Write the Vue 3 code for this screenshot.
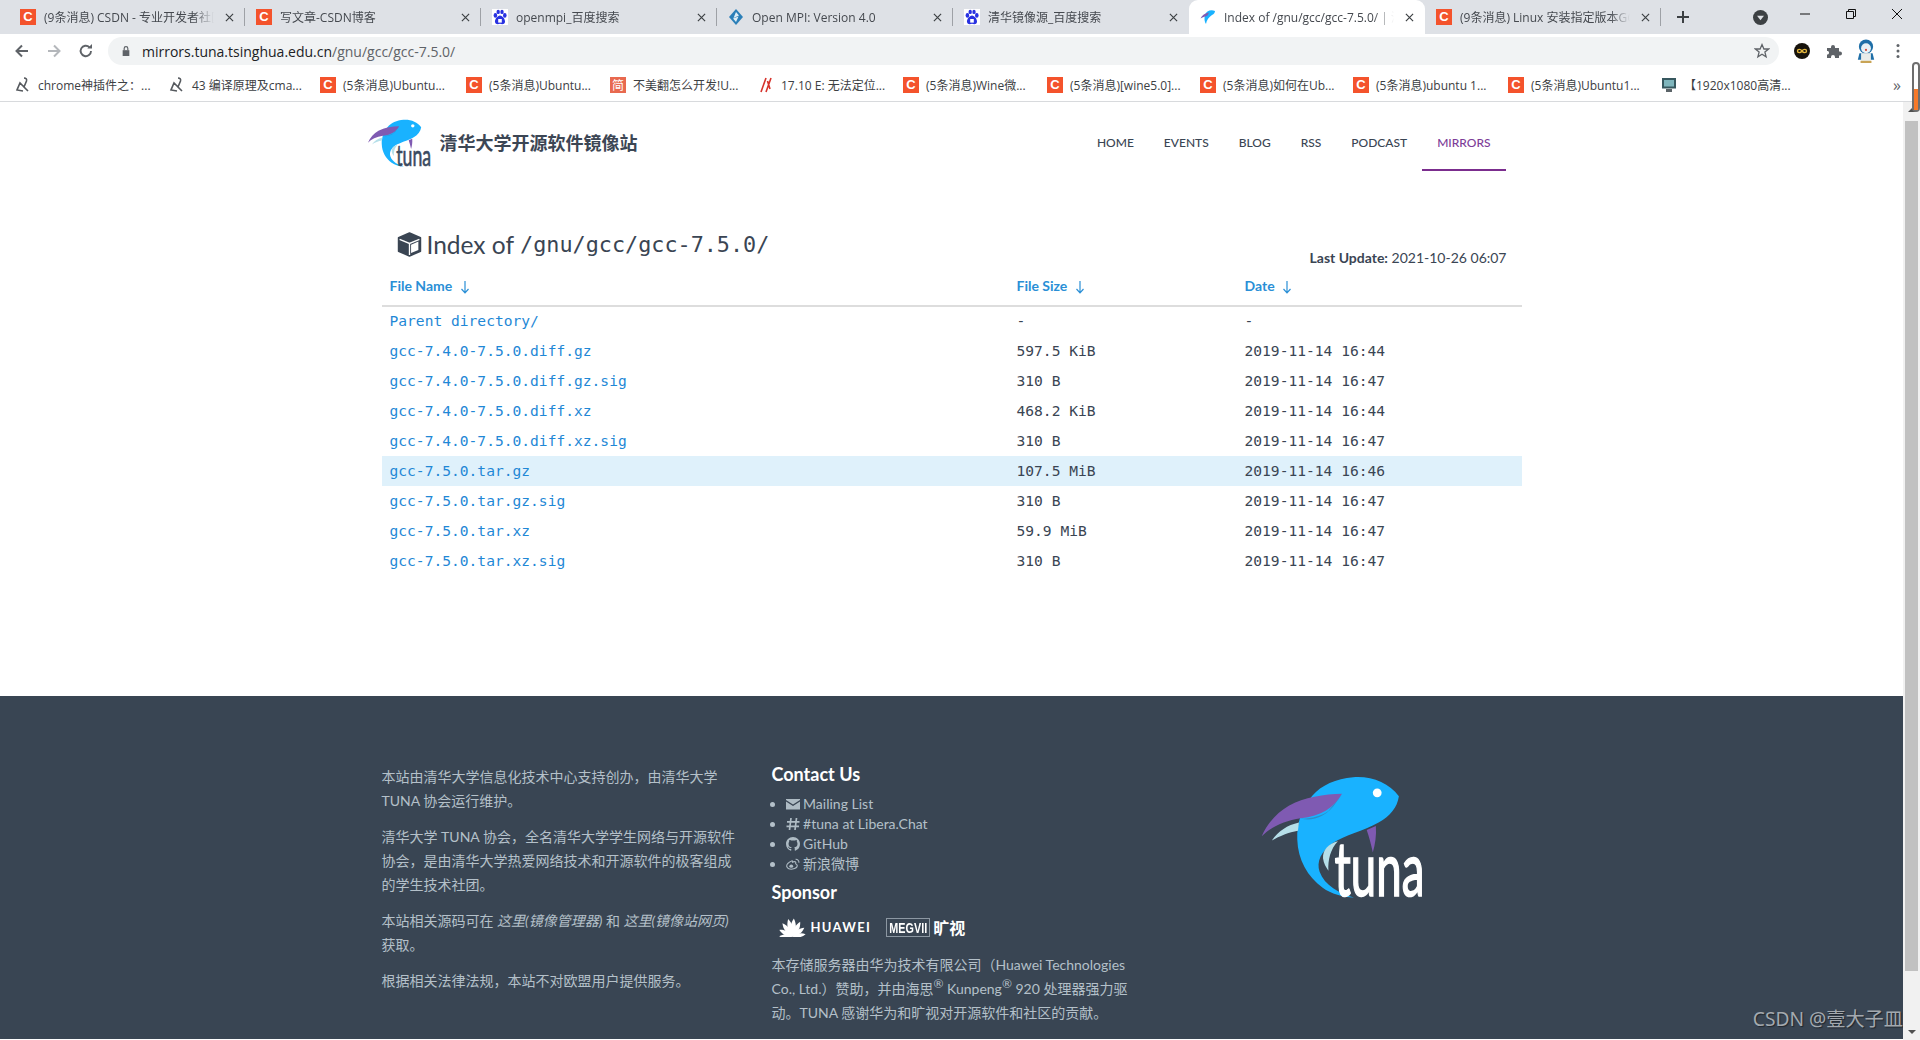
<template>
  <div class="window">
    <!-- shared fish, small one in the header and big one in the footer -->
    <svg class="defs" width="0" height="0">
      <g id="tuna-fish">
        <path d="M470 112C440 72 390 52 335 56C285 60 240 80 215 110C185 145 168 190 170 240C172 300 200 350 245 382C270 400 305 410 338 411C295 400 250 375 236 335C226 305 240 275 275 250C310 228 365 215 410 190C445 170 465 145 470 112Z" fill="#19b2ff"/>
        <path d="M180 178C210 186 255 178 285 130L302 106L262 156C240 172 205 180 180 178Z" fill="#2b8fc9"/>
        <path d="M302 105C250 106 190 115 145 140C110 160 82 192 65 230C90 205 130 184 180 177C240 172 280 145 302 105Z" fill="#7f5ab2"/>
        <path d="M95 243C115 215 140 198 175 190L172 214C145 218 118 230 95 243Z" fill="#b6dfe9"/>
        <path d="M290 245C262 252 245 270 246 295C248 310 255 322 262 332C260 300 268 268 290 245Z" fill="#b6dfe9"/>
        <path d="M375 212L402 200C404 228 400 255 393 278C388 255 382 232 375 212Z" fill="#7f5ab2"/>
        <circle cx="406" cy="102" r="13" fill="#fff"/>
      </g>
    </svg>

    <div class="tabstrip">
      <div
        v-for="(tab, i) in tabs"
        :key="i"
        class="tab"
        :class="{ active: tab.active, nosep: tab.active || tabs[i + 1]?.active }"
      >
        <span v-if="tab.icon === 'csdn'" class="fav-c">C</span>
        <svg v-else-if="tab.icon === 'baidu'" class="fav" viewBox="0 0 16 16">
          <rect width="16" height="16" fill="#fff"/>
          <ellipse cx="3.4" cy="6.4" rx="1.8" ry="2.3" fill="#2932e1"/>
          <ellipse cx="6.2" cy="2.9" rx="1.7" ry="2.2" fill="#2932e1"/>
          <ellipse cx="10" cy="2.9" rx="1.7" ry="2.2" fill="#2932e1"/>
          <ellipse cx="12.8" cy="6.4" rx="1.8" ry="2.3" fill="#2932e1"/>
          <path d="M8 6.5C5.5 6.5 2.6 10.5 3 13C3.4 15.6 6 15.4 8 14.8C10 15.4 12.6 15.6 13 13C13.4 10.5 10.5 6.5 8 6.5Z" fill="#2932e1"/>
          <rect x="6.2" y="10" width="3.6" height="3.6" fill="#fff"/>
        </svg>
        <svg v-else-if="tab.icon === 'mpi'" class="fav" viewBox="0 0 16 16">
          <path d="M8 0L15 8L8 16L1 8Z" fill="#2b7fb8"/>
          <path d="M8 3L11 6.5L5.5 9L8 3ZM10.5 7.5L8 13L5 9.5Z" fill="#dfeef6"/>
        </svg>
        <svg v-else class="fav" viewBox="0 0 16 16">
          <path d="M15 2C11 0 6 2 5 6C4 9 4.5 13 6 15C6.5 11 9 8 12 6C14 5 15 3.5 15 2Z" fill="#19b2ff"/>
          <path d="M9 3.5C5 4 2 6 0.5 9.5C3 8 6 7.5 7.5 6.5Z" fill="#7f5ab2"/>
        </svg>
        <span class="tab-title">{{ tab.title }}</span>
        <svg class="tab-x" viewBox="0 0 10 10"><path d="M1 1L9 9M9 1L1 9" stroke="#3c4043" stroke-width="1.3"/></svg>
      </div>
      <svg class="plus" viewBox="0 0 14 14"><path d="M7 1V13M1 7H13" stroke="#3c4043" stroke-width="2"/></svg>
      <svg class="tab-menu" viewBox="0 0 14 14"><circle cx="7" cy="7" r="7" fill="#3c4043"/><path d="M3.8 5.4H10.2L7 9.6Z" fill="#dee1e6"/></svg>
      <div class="winbtns">
        <svg viewBox="0 0 12 12"><path d="M1 6H11" stroke="#111" stroke-width="1"/></svg>
        <svg viewBox="0 0 12 12"><path d="M1.5 3.5H8.5V10.5H1.5ZM3.5 3.5V1.5H10.5V8.5H8.5" fill="none" stroke="#111" stroke-width="1"/></svg>
        <svg viewBox="0 0 12 12"><path d="M1 1L11 11M11 1L1 11" stroke="#111" stroke-width="1"/></svg>
      </div>
    </div>

    <div class="toolbar">
      <button class="tool">
        <svg viewBox="0 0 16 16"><path d="M14 8H3M8 2.5L2.5 8L8 13.5" fill="none" stroke="#5f6368" stroke-width="2"/></svg>
      </button>
      <button class="tool">
        <svg viewBox="0 0 16 16"><path d="M2 8H13M8 2.5L13.5 8L8 13.5" fill="none" stroke="#b4b7bb" stroke-width="2"/></svg>
      </button>
      <button class="tool">
        <svg viewBox="0 0 16 16"><path d="M13 8A5.2 5.2 0 1 1 11.4 4.2" fill="none" stroke="#5f6368" stroke-width="1.9"/><path d="M9.3 5.6H14V1Z" fill="#5f6368"/></svg>
      </button>
      <div class="omnibox">
        <svg class="lock" viewBox="0 0 12 14"><path d="M2 6H10V13H2Z" fill="#5f6368"/><path d="M3.8 6V4A2.2 2.2 0 0 1 8.2 4V6" fill="none" stroke="#5f6368" stroke-width="1.4"/></svg>
        <span class="url"><b>mirrors.tuna.tsinghua.edu.cn</b>/gnu/gcc/gcc-7.5.0/</span>
        <svg class="star" viewBox="0 0 16 16"><path d="M8 1.6L9.9 6H14.6L10.9 9.1L12.1 13.8L8 11.2L3.9 13.8L5.1 9.1L1.4 6H6.1Z" fill="none" stroke="#5f6368" stroke-width="1.3"/></svg>
      </div>
      <div class="ext-group">
        <button class="tool">
          <svg viewBox="0 0 16 16"><circle cx="8" cy="8" r="8" fill="#17130c"/><path d="M8 8C6.5 5.8 3.5 6 3.5 8S6.5 10.2 8 8C9.5 5.8 12.5 6 12.5 8S9.5 10.2 8 8Z" fill="none" stroke="#e2b53c" stroke-width="1.4"/></svg>
        </button>
        <button class="tool">
          <svg viewBox="0 0 16 16"><path d="M1 5H5V4A2 2 0 0 1 9 4V5H13V8.500H14A2 2 0 0 1 14 12.500H13V15H9V14A2 2 0 0 0 5 14V15H1V11.500H2A2 2 0 0 0 2 8H1Z" fill="#5f6368"/></svg>
        </button>
        <button class="tool">
          <svg class="penguin" viewBox="0 0 16 22"><ellipse cx="8" cy="7" rx="6.500" ry="6.500" fill="#1f6fa8"/><ellipse cx="8" cy="8.500" rx="4.500" ry="4.500" fill="#e8f1f5"/><circle cx="8" cy="10" r="1" fill="#d4483a"/><path d="M2 13H14L15.500 19H0.500Z" fill="#1f6fa8"/><rect x="3.500" y="13" width="9" height="7" fill="#e9ecea"/><path d="M3 20H13V22H3Z" fill="#c9a455"/></svg>
        </button>
        <button class="tool">
          <svg viewBox="0 0 16 16"><circle cx="8" cy="2.500" r="1.500" fill="#5f6368"/><circle cx="8" cy="8" r="1.500" fill="#5f6368"/><circle cx="8" cy="13.500" r="1.500" fill="#5f6368"/></svg>
        </button>
      </div>
    </div>

    <div class="bookmarks">
      <div v-for="(b, i) in bookmarks" :key="i" class="bm" :style="{ width: b.w + 'px' }">
        <span v-if="b.icon === 'csdn'" class="fav-c">C</span>
        <span v-else-if="b.icon === 'jian'" class="fav-j">简</span>
        <svg v-else-if="b.icon === 'lambda'" class="fav" viewBox="0 0 16 16">
          <path d="M9 1C11 1 12 2 11.500 4L9 10L13 14M9 10L5 6L2 13L8 14" fill="none" stroke="#55595e" stroke-width="1.600"/>
        </svg>
        <svg v-else-if="b.icon === 'slash'" class="fav" viewBox="0 0 16 16">
          <path d="M8 1L3 15M13 1L8 15M9.500 4L12 12" fill="none" stroke="#d6332c" stroke-width="1.600"/>
        </svg>
        <svg v-else class="fav" viewBox="0 0 16 16">
          <rect x="1" y="1" width="14" height="10.500" fill="#37585f"/>
          <rect x="3" y="3" width="10" height="6.500" fill="#7fb6bd"/>
          <rect x="5" y="12" width="6" height="3" fill="#5b6468"/>
        </svg>
        <span class="bm-text">{{ b.title }}</span>
      </div>
      <span class="bm-more">»</span>
    </div>

    <div class="viewport">
      <div class="page">
        <main class="main">
          <div class="container">
            <header class="site-head">
              <div class="brand">
                <svg class="logo-small" viewBox="60 50 490 365">
                  <use href="#tuna-fish"/>
                  <text x="280" y="408" class="logo-word" textLength="265" lengthAdjust="spacingAndGlyphs">tuna</text>
                </svg>
                <span class="brand-name">清华大学开源软件镜像站</span>
              </div>
              <nav class="nav">
                <a v-for="item in navItems" :key="item" :class="{ current: item === 'MIRRORS' }">{{ item }}</a>
              </nav>
            </header>

            <div class="title-row">
              <h1>
                <svg class="cube" viewBox="0 0 24 24">
                  <path d="M12 1L22.500 5.500V18.500L12 23L1.500 18.500V5.500Z" fill="#3a4553" stroke="#3a4553" stroke-linejoin="round" stroke-width="1.500"/>
                  <path d="M13.500 12.200L20.500 9.200V17.200L13.500 20.200Z" fill="#fff"/>
                  <path d="M2.500 7L12 11L21.500 7M12 11V22" fill="none" stroke="#fff" stroke-width="1.300"/>
                </svg>
                Index of <code>/gnu/gcc/gcc-7.5.0/</code>
              </h1>
              <p class="last-update"><strong>Last Update:</strong> 2021-10-26 06:07</p>
            </div>

            <table class="files">
              <thead>
                <tr>
                  <th v-for="col in columns" :key="col">
                    {{ col }}
                    <svg class="sort" viewBox="0 0 10 14"><path d="M5 1V12.500M1.500 9L5 12.800L8.500 9" fill="none" stroke="#2a8fd6" stroke-width="1.200"/></svg>
                  </th>
                </tr>
              </thead>
              <tbody>
                <tr v-for="file in files" :key="file.name" :class="{ hot: file.hot }">
                  <td><a>{{ file.name }}</a></td>
                  <td>{{ file.size }}</td>
                  <td>{{ file.date }}</td>
                </tr>
              </tbody>
            </table>
          </div>
        </main>

        <footer class="footer">
          <div class="container footer-grid">
            <div class="col about">
              <p>本站由清华大学信息化技术中心支持创办，由清华大学 TUNA 协会运行维护。</p>
              <p>清华大学 TUNA 协会，全名清华大学学生网络与开源软件协会，是由清华大学热爱网络技术和开源软件的极客组成的学生技术社团。</p>
              <p>本站相关源码可在 <em>这里(镜像管理器)</em> 和 <em>这里(镜像站网页)</em> 获取。</p>
              <p>根据相关法律法规，本站不对欧盟用户提供服务。</p>
            </div>

            <div class="col contact">
              <h3>Contact Us</h3>
              <ul>
                <li>
                  <svg class="ci" viewBox="0 0 14 12"><path d="M0 1H14V2L7 6.500L0 2ZM0 3.500L7 8L14 3.500V11.500H0Z" fill="#aebbc4"/></svg>
                  Mailing List
                </li>
                <li>
                  <svg class="ci" viewBox="0 0 14 14"><path d="M5 1L3.500 13M10.500 1L9 13M1 4.800H13.500M0.500 9.300H13" fill="none" stroke="#aebbc4" stroke-width="1.700"/></svg>
                  #tuna at Libera.Chat
                </li>
                <li>
                  <svg class="ci" viewBox="0 0 16 16"><path d="M8 0C3.580 0 0 3.580 0 8c0 3.540 2.290 6.530 5.470 7.590.4.070.55-.17.55-.38 0-.19-.01-.82-.01-1.490-2.010.37-2.530-.49-2.690-.94-.09-.23-.48-.94-.82-1.130-.28-.15-.68-.52-.01-.53.63-.01 1.080.58 1.230.82.72 1.210 1.870.87 2.330.66.07-.52.28-.87.51-1.070-1.780-.2-3.640-.89-3.640-3.950 0-.87.31-1.590.82-2.150-.08-.2-.36-1.020.08-2.120 0 0 .67-.21 2.200.82.64-.18 1.320-.27 2-.27.68 0 1.360.09 2 .27 1.530-1.040 2.200-.82 2.200-.82.44 1.100.16 1.920.08 2.120.51.56.82 1.270.82 2.150 0 3.070-1.870 3.750-3.650 3.950.29.25.54.73.54 1.480 0 1.070-.01 1.930-.01 2.200 0 .21.15.46.55.38A8.013 8.013 0 0016 8c0-4.420-3.580-8-8-8z" fill="#aebbc4"/></svg>
                  GitHub
                </li>
                <li>
                  <svg class="ci" viewBox="0 0 16 13"><path d="M6.500 3C3 4.500 .5 7 .8 9.300C1.200 11.800 4.500 12.800 7.500 12.300C10.500 11.800 13 10 12.800 8C12.600 6.800 11.500 6.500 11 6.300C11.500 5 11.200 4 10 3.800C9 3.600 8 4.200 7.500 4.400C7.800 3.200 7.500 2.600 6.500 3Z" fill="none" stroke="#aebbc4" stroke-width="1.200"/><ellipse cx="6" cy="9" rx="2.200" ry="1.800" fill="#aebbc4"/><path d="M11 1.200C13 1 15 2.500 14.800 5" fill="none" stroke="#aebbc4" stroke-width="1.200"/></svg>
                  新浪微博
                </li>
              </ul>
              <h3 class="sponsor">Sponsor</h3>
              <div class="sponsors">
                <svg class="hw-icon" viewBox="0 0 28 20">
                  <path
                    v-for="p in huaweiPetals"
                    :key="p.a"
                    d="M0 0C-3.200 -5 -3.400 -10 -1.200 -14.500C2 -10 2.400 -5 0 0Z"
                    fill="#fff"
                    :transform="`translate(14 20) rotate(${p.a}) scale(${p.s})`"
                  />
                </svg>
                <span class="hw-text">HUAWEI</span>
                <span class="megvii"><span>MEGVII</span></span>
                <span class="kuangshi">旷视</span>
              </div>
              <p>本存储服务器由华为技术有限公司（Huawei Technologies Co., Ltd.）赞助，并由海思<sup>®</sup> Kunpeng<sup>®</sup> 920 处理器强力驱动。TUNA 感谢华为和旷视对开源软件和社区的贡献。</p>
            </div>

            <div class="col mark">
              <svg class="logo-big" viewBox="60 50 490 365">
                <use href="#tuna-fish"/>
                <text x="280" y="408" class="logo-word" textLength="265" lengthAdjust="spacingAndGlyphs">tuna</text>
              </svg>
            </div>
          </div>
        </footer>

        <div class="watermark">CSDN @壹大子皿</div>
      </div>

      <div class="scrollbar">
        <span class="arrow up"></span>
        <div class="thumb"></div>
        <span class="arrow down"></span>
      </div>
      <div class="pill"><i></i></div>
    </div>
  </div>
</template>

<script setup>
const tabs = [
  { icon: 'csdn', title: '(9条消息) CSDN - 专业开发者社区' },
  { icon: 'csdn', title: '写文章-CSDN博客' },
  { icon: 'baidu', title: 'openmpi_百度搜索' },
  { icon: 'mpi', title: 'Open MPI: Version 4.0' },
  { icon: 'baidu', title: '清华镜像源_百度搜索' },
  { icon: 'tuna', title: 'Index of /gnu/gcc/gcc-7.5.0/ | 清华', active: true },
  { icon: 'csdn', title: '(9条消息) Linux 安装指定版本GCC' }
]

const bookmarks = [
  { icon: 'lambda', title: 'chrome神插件之：...', w: 154 },
  { icon: 'lambda', title: '43 编译原理及cma...', w: 151 },
  { icon: 'csdn', title: '(5条消息)Ubuntu...', w: 146 },
  { icon: 'csdn', title: '(5条消息)Ubuntu...', w: 144 },
  { icon: 'jian', title: '不美翻怎么开发!U...', w: 148 },
  { icon: 'slash', title: '17.10 E: 无法定位...', w: 145 },
  { icon: 'csdn', title: '(5条消息)Wine微...', w: 144 },
  { icon: 'csdn', title: '(5条消息)[wine5.0]...', w: 153 },
  { icon: 'csdn', title: '(5条消息)如何在Ub...', w: 153 },
  { icon: 'csdn', title: '(5条消息)ubuntu 1...', w: 155 },
  { icon: 'csdn', title: '(5条消息)Ubuntu1...', w: 153 },
  { icon: 'monitor', title: '【1920x1080高清...', w: 226 }
]

const navItems = ['HOME', 'EVENTS', 'BLOG', 'RSS', 'PODCAST', 'MIRRORS']
const columns = ['File Name', 'File Size', 'Date']

const files = [
  { name: 'Parent directory/', size: '-', date: '-' },
  { name: 'gcc-7.4.0-7.5.0.diff.gz', size: '597.5 KiB', date: '2019-11-14 16:44' },
  { name: 'gcc-7.4.0-7.5.0.diff.gz.sig', size: '310 B', date: '2019-11-14 16:47' },
  { name: 'gcc-7.4.0-7.5.0.diff.xz', size: '468.2 KiB', date: '2019-11-14 16:44' },
  { name: 'gcc-7.4.0-7.5.0.diff.xz.sig', size: '310 B', date: '2019-11-14 16:47' },
  { name: 'gcc-7.5.0.tar.gz', size: '107.5 MiB', date: '2019-11-14 16:46', hot: true },
  { name: 'gcc-7.5.0.tar.gz.sig', size: '310 B', date: '2019-11-14 16:47' },
  { name: 'gcc-7.5.0.tar.xz', size: '59.9 MiB', date: '2019-11-14 16:47' },
  { name: 'gcc-7.5.0.tar.xz.sig', size: '310 B', date: '2019-11-14 16:47' }
]

const huaweiPetals = [
  { a: -84, s: 0.95 },
  { a: -58, s: 1.05 },
  { a: -32, s: 1.2 },
  { a: -9, s: 1.3 },
  { a: 9, s: 1.3 },
  { a: 32, s: 1.2 },
  { a: 58, s: 1.05 },
  { a: 84, s: 0.95 }
]
</script>

<style>
html,
body {
  margin: 0;
  overflow: hidden;
}
</style>

<style scoped>
.window {
  width: 1920px;
  height: 1040px;
  overflow: hidden;
  display: flex;
  flex-direction: column;
  background: #fff;
  font-family: Lato, "Noto Sans CJK SC", sans-serif;
}

.defs {
  position: absolute;
}

/* browser chrome */
.tabstrip {
  height: 34px;
  flex: none;
  display: flex;
  align-items: stretch;
  padding-left: 9px;
  background: #dee1e6;
  font-family: "Open Sans", "Noto Sans CJK SC", sans-serif;
  font-size: 12px;
  color: #45494f;
}

.tab {
  width: 236px;
  flex: none;
  box-sizing: border-box;
  display: flex;
  align-items: center;
  gap: 8px;
  padding: 0 11px;
  position: relative;
}

.tab::after {
  content: "";
  position: absolute;
  right: 0;
  top: 8px;
  bottom: 8px;
  width: 1px;
  background: #9ea1a6;
}

.tab.nosep::after {
  display: none;
}

.tab.active {
  background: #fff;
  border-radius: 9px 9px 0 0;
}

.tab-title {
  flex: 1;
  min-width: 0;
  white-space: nowrap;
  overflow: hidden;
  -webkit-mask-image: linear-gradient(to right, #000 88%, transparent);
  mask-image: linear-gradient(to right, #000 88%, transparent);
}

.tab-x {
  width: 9px;
  height: 9px;
  flex: none;
  margin: 0 0 0 3px;
}

.fav {
  width: 16px;
  height: 16px;
  flex: none;
}

.fav-c {
  width: 16px;
  height: 16px;
  flex: none;
  background: #f4532c;
  color: #fff;
  font: 700 13px/16px "Liberation Sans", sans-serif;
  text-align: center;
}

.fav-j {
  width: 16px;
  height: 16px;
  flex: none;
  background: #e8694f;
  color: #fff;
  font: 12px/16px "Noto Sans CJK SC", sans-serif;
  text-align: center;
}

.plus {
  width: 14px;
  height: 14px;
  align-self: center;
  margin-left: 15px;
}

.tab-menu {
  width: 15px;
  height: 15px;
  align-self: center;
  margin-left: 63px;
}

.winbtns {
  margin-left: auto;
  display: flex;
  align-items: center;
  gap: 34px;
  padding: 0 17px 6px 0;
}

.winbtns svg {
  width: 12px;
  height: 12px;
}

.toolbar {
  height: 34px;
  flex: none;
  display: flex;
  align-items: center;
  padding-left: 6px;
  background: #fff;
}

.tool {
  width: 32px;
  height: 28px;
  flex: none;
  padding: 0;
  border: 0;
  background: none;
  display: flex;
  align-items: center;
  justify-content: center;
}

.tool svg {
  width: 16px;
  height: 16px;
}

.tool .penguin {
  width: 18px;
  height: 24px;
}

.omnibox {
  flex: 1;
  height: 28px;
  margin-left: 6px;
  display: flex;
  align-items: center;
  padding: 0 9px 0 13px;
  background: #f1f3f4;
  border-radius: 14px;
}

.lock {
  width: 10px;
  height: 12px;
}

.url {
  margin-left: 11px;
  font: 14px "Open Sans", sans-serif;
  color: #5f6368;
}

.url b {
  font-weight: 400;
  color: #202124;
}

.star {
  width: 16px;
  height: 16px;
  margin-left: auto;
}

.ext-group {
  width: 141px;
  box-sizing: border-box;
  padding-left: 7px;
  display: flex;
}

.bookmarks {
  height: 34px;
  flex: none;
  box-sizing: border-box;
  display: flex;
  align-items: center;
  padding-left: 15px;
  border-bottom: 1px solid #d8dadd;
  background: #fff;
  font-family: "Open Sans", "Noto Sans CJK SC", sans-serif;
  font-size: 12px;
  color: #3c4043;
}

.bm {
  flex: none;
  display: flex;
  align-items: center;
  gap: 7px;
  white-space: nowrap;
  overflow: hidden;
}

.bm-more {
  margin-left: 6px;
  font-size: 16px;
  color: #5f6368;
}

/* page */
.viewport {
  flex: 1;
  min-height: 0;
  display: flex;
  position: relative;
}

.page {
  flex: 1;
  min-width: 0;
  position: relative;
  overflow: hidden;
}

.container {
  width: 1170px;
  margin: 0 auto;
}

.main {
  height: 594px;
  color: #3a4553;
}

.site-head {
  height: 69px;
  display: flex;
  justify-content: space-between;
  padding: 0 31px 0 0;
}

.brand {
  display: flex;
  align-items: flex-start;
  gap: 8px;
}

.logo-small {
  width: 65px;
  height: 48px;
  margin-top: 17px;
  color: #3a4a60;
}

.logo-big {
  width: 166px;
  height: 124px;
  color: #fff;
}

.logo-word {
  font-family: Lato, sans-serif;
  font-size: 222px;
  fill: currentColor;
  stroke: currentColor;
  stroke-width: 5px;
}

.brand-name {
  margin-top: 26px;
  font: 700 18px/28px "Noto Sans CJK SC", sans-serif;
  color: #3c4654;
}

.nav {
  display: flex;
  align-items: stretch;
}

.nav a {
  display: flex;
  align-items: center;
  padding: 14px 15px 0;
  border-bottom: 2px solid transparent;
  font-size: 12px;
  font-weight: 500;
  color: #3a4553;
}

.nav a.current {
  color: #7d3c98;
  border-bottom-color: #7b2d8e;
}

.title-row {
  height: 50px;
  margin-top: 47px;
  display: flex;
  justify-content: space-between;
  padding: 0 30px 0 15px;
}

h1 {
  margin: 0;
  height: 50px;
  box-sizing: border-box;
  display: flex;
  align-items: center;
  padding: 2px 0 0 15px;
  font-size: 24.5px;
  font-weight: 400;
  color: #3a4553;
}

h1 code {
  font: 21.8px "DejaVu Sans Mono", monospace;
  margin-left: 6px;
}

.cube {
  width: 25px;
  height: 25px;
  margin-right: 5px;
}

.last-update {
  margin: 30px 0 0;
  font-size: 14px;
  line-height: 20px;
}

.last-update strong {
  font-weight: 700;
}

.files {
  width: 1140px;
  margin: 0 auto;
  border-collapse: collapse;
  table-layout: fixed;
}

.files th {
  height: 38px;
  padding: 0 8px 2px;
  border-bottom: 2px solid #ddd;
  box-sizing: border-box;
  text-align: left;
  font-size: 14px;
  font-weight: 700;
  color: #2a8fd6;
}

.files th:nth-child(1) {
  width: 55%;
}

.files th:nth-child(2) {
  width: 20%;
}

.sort {
  width: 10px;
  height: 14px;
  margin-left: 4px;
  vertical-align: -3px;
}

.files td {
  height: 30px;
  padding: 0 8px 2px;
  box-sizing: border-box;
  font: 14.6px "DejaVu Sans Mono", monospace;
  color: #3a4553;
}

.files a {
  color: #1f88d6;
}

.files tr.hot td {
  background: #dff1fb;
}

.footer {
  height: 343px;
  background: #394553;
  padding-top: 68px;
  box-sizing: border-box;
  font-size: 14px;
  line-height: 24px;
  color: #b4c0c9;
}

.footer-grid {
  display: grid;
  grid-template-columns: 390px 390px 390px;
}

.col {
  padding: 0 15px;
}

.col p {
  margin: 0 0 12px;
}

.about {
  padding-top: 1px;
}

.contact h3 {
  margin: 0 0 10px;
  font-size: 18px;
  line-height: 20px;
  font-weight: 700;
  color: #fff;
}

.contact h3.sponsor {
  margin: 3px 0 0;
  padding-top: 5px;
}

.contact ul {
  margin: 0;
  padding-left: 14px;
  line-height: 20px;
  list-style: disc;
}

.ci {
  width: 14px;
  height: 14px;
  vertical-align: -2px;
}

.sponsors {
  height: 50px;
  margin-bottom: 1px;
  display: flex;
  align-items: center;
  padding: 0 0 0 7px;
}

.hw-icon {
  width: 27px;
  height: 20px;
  margin-right: 5px;
}

.hw-text {
  font-size: 13px;
  font-weight: 700;
  letter-spacing: 1.3px;
  color: #fff;
}

.megvii {
  margin-left: 15px;
  width: 44px;
  height: 19px;
  box-sizing: border-box;
  border: 1px solid #8c97a2;
  display: flex;
  justify-content: center;
  overflow: hidden;
  font: 700 15px/17px "Liberation Sans", sans-serif;
  color: #fff;
  white-space: nowrap;
}

.megvii span {
  display: inline-block;
  transform: scaleX(0.72);
}

.kuangshi {
  margin-left: 3px;
  font: 700 16px/20px "Noto Sans CJK SC", sans-serif;
  color: #fff;
}

sup {
  font-size: 12px;
  line-height: 0;
}

.mark {
  padding: 11px 0 0 113px;
}

.watermark {
  position: absolute;
  right: 0;
  bottom: 8px;
  font: 19.2px "Noto Sans", "Noto Sans CJK SC", sans-serif;
  color: #a3a9af;
  text-shadow: 1px 1px 1px #20262d;
  white-space: nowrap;
}

/* fake scrollbar, the reference has one drawn by the OS */
.scrollbar {
  width: 17px;
  flex: none;
  display: flex;
  flex-direction: column;
  align-items: center;
  background: #f1f1f1;
}

.thumb {
  width: 13px;
  height: 850px;
  margin-top: 2px;
  background: #c1c1c1;
}

.arrow {
  width: 0;
  height: 0;
  border-left: 4px solid transparent;
  border-right: 4px solid transparent;
}

.arrow.up {
  margin-top: 6px;
  margin-bottom: 7px;
  border-bottom: 4px solid #505050;
}

.arrow.down {
  margin-top: auto;
  margin-bottom: 6px;
  border-top: 4px solid #505050;
}

.pill {
  position: absolute;
  right: 0;
  top: -40px;
  width: 8px;
  height: 50px;
  box-sizing: border-box;
  border: 2px solid #6e6e6e;
  border-radius: 4px;
  background: #fff;
}

.pill i {
  display: block;
  width: 4px;
  height: 21px;
  margin-top: 25px;
  background: #f5792a;
}
</style>
